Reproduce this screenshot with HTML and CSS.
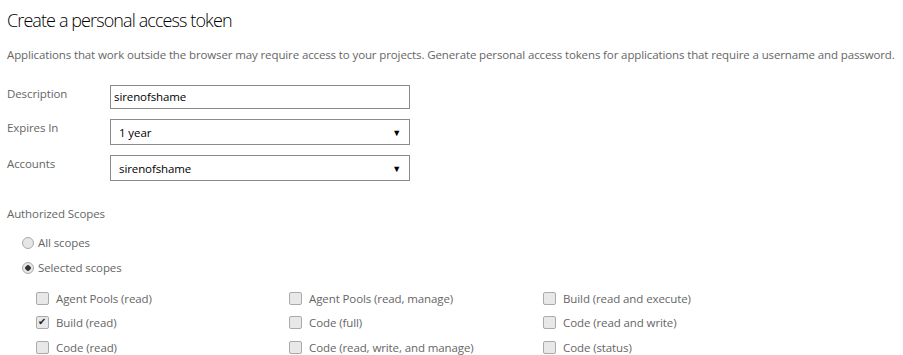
FILE: index.html
```html
<!DOCTYPE html>
<html>

    <head>
        <!-- Meta Data -->
        <meta charset="UTF-8">

        <!-- Title -->
        <title>Create a personal access token</title>

        <!-- Style -->
        <link rel="stylesheet" href="styles.css">
    </head>

    <body>
        <!-- Content -->
        <div class="page">
            <h1>Create a personal access token</h1>
            <p class="intro">Applications that work outside the browser may require access to your projects. Generate personal access tokens for applications that require a username and password.</p>

            <div class="form-row">
                <label class="form-label">Description</label>
                <div class="field">sirenofshame</div>
            </div>
            <div class="form-row">
                <label class="form-label">Expires In</label>
                <div class="field select">1 year<span class="arrow">&#9660;</span></div>
            </div>
            <div class="form-row">
                <label class="form-label">Accounts</label>
                <div class="field select">sirenofshame<span class="arrow">&#9660;</span></div>
            </div>

            <h2>Authorized Scopes</h2>
            <div class="radios">
                <div class="radio-row"><span class="radio"></span>All scopes</div>
                <div class="radio-row"><span class="radio checked"></span>Selected scopes</div>
            </div>

            <div class="scopes">
                <div class="scope"><span class="box"></span>Agent Pools (read)</div>
                <div class="scope"><span class="box"></span>Agent Pools (read, manage)</div>
                <div class="scope"><span class="box"></span>Build (read and execute)</div>
                <div class="scope"><span class="box checked"></span>Build (read)</div>
                <div class="scope"><span class="box"></span>Code (full)</div>
                <div class="scope"><span class="box"></span>Code (read and write)</div>
                <div class="scope"><span class="box"></span>Code (read)</div>
                <div class="scope"><span class="box"></span>Code (read, write, and manage)</div>
                <div class="scope"><span class="box"></span>Code (status)</div>
            </div>
        </div>
    </body>

</html>
```

FILE: styles.css
```css
html {
    background-color: #fff;
}

body {
    margin: 0;
    font-family: "Open Sans", sans-serif;
    font-size: 11.5px;
    letter-spacing: -0.1px;
    color: #666;
}

.page {
    padding: 0 7px;
}

h1 {
    margin: 6px 0 0 0;
    font-size: 18px;
    font-weight: 300;
    letter-spacing: -0.9px;
    line-height: 28px;
    color: #000;
}

.intro {
    margin: 12px 0 21px 0;
    line-height: 18px;
    letter-spacing: -0.12px;
    white-space: nowrap;
}

.form-row {
    display: flex;
    align-items: flex-start;
    margin-bottom: 10px;
}

.form-label {
    width: 103px;
    line-height: 18px;
}

.field {
    position: relative;
    box-sizing: border-box;
    width: 300px;
    height: 24px;
    padding: 0 3px;
    border: 1px solid #8a8a8a;
    line-height: 22px;
    color: #000;
}

.select {
    height: 26px;
    padding: 0 8px;
    line-height: 25px;
}

.arrow {
    position: absolute;
    right: 8px;
    top: 0;
    font-size: 9px;
    color: #000;
}

h2 {
    margin: 24px 0 7px 0;
    font-size: 11.5px;
    font-weight: normal;
    line-height: 18px;
}

.radios {
    padding-left: 15px;
}

.radio-row {
    display: flex;
    align-items: center;
    height: 25px;
}

.radio {
    box-sizing: border-box;
    width: 12px;
    height: 12px;
    margin-right: 4px;
    border: 1px solid #aaa;
    border-radius: 50%;
    background: #e6e6e6;
}

.radio.checked {
    background: radial-gradient(circle, #333 0, #333 2.5px, #e6e6e6 3px);
}

.scopes {
    display: grid;
    grid-template-columns: 253px 254px 1fr;
    padding: 6px 0 0 29px;
}

.scope {
    display: flex;
    align-items: center;
    height: 24.5px;
}

.box {
    position: relative;
    box-sizing: border-box;
    width: 13px;
    height: 13px;
    margin-right: 7px;
    border: 1px solid #aaa;
    border-radius: 2px;
    background: #e8e8e8;
}

.box.checked::after {
    content: "\2714";
    position: absolute;
    left: 1px;
    top: -3px;
    font-size: 10px;
    color: #222;
}
```
